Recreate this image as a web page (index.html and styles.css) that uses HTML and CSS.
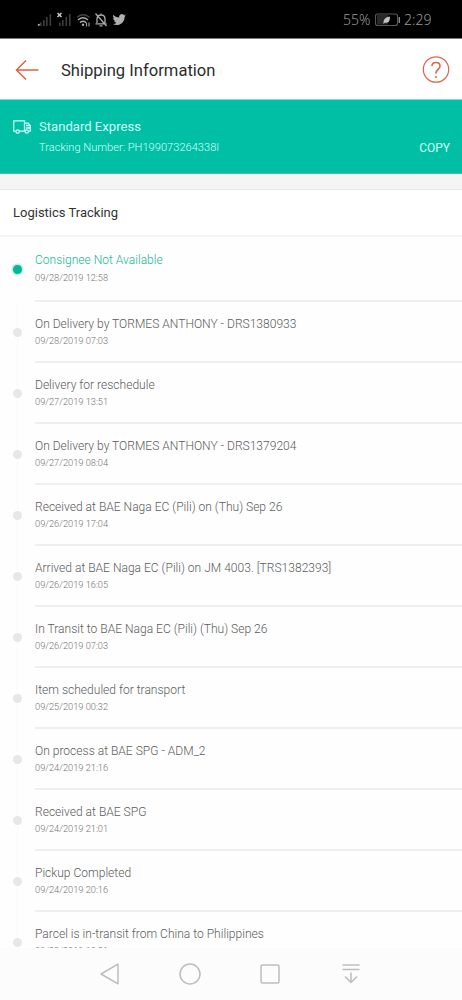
FILE: index.html
```
<!DOCTYPE html>
<html lang="en">
<head>
<meta charset="utf-8">
<title>Shipping Information</title>
<link rel="stylesheet" href="styles.css">
</head>
<body>
<div class="screen">
  <div class="status">
    <svg class="status-icons" width="92" height="16" viewBox="0 0 92 16">
      <g fill="#3d3d3d"><path d="M3 10.500h1.600V14H3zM6 8h1.600v6H6zM9 5h1.600v9H9zM12.500 2h1.600v12h-1.600z"/><path d="M22 10.500h1.600V14H22zM25 8h1.600v6H25zM28.500 5h1.600v9h-1.600zM32 2h1.600v12H32z"/></g>
      <circle cx="1.800" cy="12.800" r="1.100" fill="#aaa"/>
      <path d="M20.500 1l4 4M24.500 1l-4 4" stroke="#ccc" stroke-width="1.500"/>
      <g fill="none" stroke="#aaa" stroke-width="1.500" stroke-linecap="round"><path d="M40.500 5Q46 .5 52 5" stroke="#444"/><path d="M41.500 7.500Q46 4 50.500 7.500M43.500 10.200Q46 8.200 48.500 10.200"/></g>
      <circle cx="46" cy="12.700" r="1.200" fill="#aaa"/><path d="M49.500 10.500v4M52 10.500v4" stroke="#999" stroke-width="1.200"/>
      <path d="M60 11V7q0-4 4-4t4 4v4M58.500 11.800h11M62.500 13.800h3M58.500 1.500l11 12.500M64 1.500v1.500" fill="none" stroke="#aaa" stroke-width="1.300"/>
      <path transform="translate(75.500 .9) scale(.56)" fill="#b0b0b0" d="M23.950 4.570a10 10 0 0 1-2.820.77 4.960 4.960 0 0 0 2.160-2.720c-.95.550-2 .950-3.130 1.180a4.920 4.920 0 0 0-8.380 4.480C7.690 8.090 4.070 6.130 1.640 3.160a4.820 4.820 0 0 0-.67 2.480c0 1.710.87 3.210 2.190 4.100a4.900 4.900 0 0 1-2.230-.62v.06a4.920 4.920 0 0 0 3.950 4.830 5 5 0 0 1-2.210.080 4.940 4.940 0 0 0 4.600 3.420A9.870 9.870 0 0 1 0 19.540a14 14 0 0 0 7.550 2.210c9.050 0 14-7.500 14-13.980v-.63a9.940 9.940 0 0 0 2.400-2.570z"/>
    </svg>
    <div class="status-right">
      <span class="percent">55%</span>
      <svg width="26" height="14" viewBox="0 0 26 14"><rect x="-.5" y="1" width="22" height="11.500" rx="2" fill="#000" stroke="#585858" stroke-width="1.100"/><path d="M1 2h11v9.500H1z" fill="#292929"/><path d="M23.300 4v6" stroke="#888" stroke-width="1.500"/><path d="M7.500 11q-1-6.500 6.500-7.500 0 7.500-5 6z" fill="#c4c4c4"/></svg>
      <span class="clock">2:29</span>
    </div>
  </div>
  <header class="bar">
    <svg class="back" width="24" height="22" viewBox="0 0 24 22"><path d="M23.500 11H1.500M11 1.500L1.500 11l9.500 9.500" fill="none" stroke="#dc6242" stroke-width="1.500"/></svg>
    <h1 class="title">Shipping Information</h1>
    <svg class="help" width="28" height="28" viewBox="0 0 28 28" fill="none" stroke="#dc6650"><circle cx="14" cy="13.500" r="12.700" stroke-width="1.200"/><path d="M10 10Q10 6.500 14 6.500t4 3.500q0 2-2 3.500t-2 4" stroke-width="1.600"/><circle cx="14" cy="21" r="1.100" fill="#dc6650" stroke="none"/></svg>
  </header>
  <section class="carrier">
    <svg class="truck" width="18" height="14" viewBox="0 0 18 14" fill="none" stroke="#c9fff6" stroke-width="1.300"><path d="M2.700 11.200H.7V.8h10.800v10.400H6.700M11.500 3.200h3.800l2 2.500v5.500h-1.500M11.500 11.200h.5M13 5.500h4M13 8h4"/><circle cx="4.700" cy="11.500" r="1.700"/><circle cx="13.700" cy="11.500" r="1.700"/></svg>
    <div class="carrier-text">
      <div class="carrier-name">Standard Express</div>
      <div class="carrier-number">Tracking Number: PH199073264338I</div>
    </div>
    <span class="copy">COPY</span>
  </section>
  <div class="gap"></div>
  <h2 class="heading">Logistics Tracking</h2>
  <main class="list">
    <div class="row current"><i class="rail"><b class="dot"></b></i><div class="event"><p class="name">Consignee Not Available</p><p class="date">09/28/2019 12:58</p></div></div>
    <div class="row"><i class="rail"><b class="dot"></b></i><div class="event"><p class="name">On Delivery by TORMES ANTHONY - DRS1380933</p><p class="date">09/28/2019 07:03</p></div></div>
    <div class="row"><i class="rail"><b class="dot"></b></i><div class="event"><p class="name">Delivery for reschedule</p><p class="date">09/27/2019 13:51</p></div></div>
    <div class="row"><i class="rail"><b class="dot"></b></i><div class="event"><p class="name">On Delivery by TORMES ANTHONY - DRS1379204</p><p class="date">09/27/2019 08:04</p></div></div>
    <div class="row"><i class="rail"><b class="dot"></b></i><div class="event"><p class="name">Received at BAE Naga EC (Pili) on (Thu) Sep 26</p><p class="date">09/26/2019 17:04</p></div></div>
    <div class="row"><i class="rail"><b class="dot"></b></i><div class="event"><p class="name">Arrived at BAE Naga EC (Pili) on JM 4003. [TRS1382393]</p><p class="date">09/26/2019 16:05</p></div></div>
    <div class="row"><i class="rail"><b class="dot"></b></i><div class="event"><p class="name">In Transit to BAE Naga EC (Pili) (Thu) Sep 26</p><p class="date">09/26/2019 07:03</p></div></div>
    <div class="row"><i class="rail"><b class="dot"></b></i><div class="event"><p class="name">Item scheduled for transport</p><p class="date">09/25/2019 00:32</p></div></div>
    <div class="row"><i class="rail"><b class="dot"></b></i><div class="event"><p class="name">On process at BAE SPG - ADM_2</p><p class="date">09/24/2019 21:16</p></div></div>
    <div class="row"><i class="rail"><b class="dot"></b></i><div class="event"><p class="name">Received at BAE SPG</p><p class="date">09/24/2019 21:01</p></div></div>
    <div class="row"><i class="rail"><b class="dot"></b></i><div class="event"><p class="name">Pickup Completed</p><p class="date">09/24/2019 20:16</p></div></div>
    <div class="row"><i class="rail"><b class="dot"></b></i><div class="event"><p class="name">Parcel is in-transit from China to Philippines</p><p class="date">09/23/2019 18:51</p></div></div>
  </main>
  <nav class="nav">
    <svg width="24" height="24" viewBox="0 0 24 24"><path d="M20 2.200v19.600L3 12z"/></svg>
    <svg width="24" height="24" viewBox="0 0 24 24"><circle cx="12" cy="12" r="10"/></svg>
    <svg width="24" height="24" viewBox="0 0 24 24"><rect x="3" y="3" width="18" height="18" rx="1.500"/></svg>
    <svg width="24" height="24" viewBox="0 0 24 24"><path d="M4.500 3h17M4.500 7.500h17M13 10.500v10M7 14.500l6 6 6-6"/></svg>
  </nav>
</div>
</body>
</html>
```
FILE: styles.css
```
* { box-sizing: border-box; margin: 0; padding: 0; }
body { font-family: Roboto, "Liberation Sans", sans-serif; background: #fff; }
.screen { width: 462px; height: 1000px; display: flex; flex-direction: column; overflow: hidden; background: #fefefe; }
.screen > * { flex-shrink: 0; }
svg { display: block; flex-shrink: 0; overflow: visible; }

.status { height: 39px; background: #000; border-bottom: 1px solid #777; display: flex; align-items: center; justify-content: space-between; padding: 1px 30px 0 37px; }
.status-right { display: flex; align-items: center; font-family: "Noto Sans", sans-serif; font-size: 14px; font-weight: 300; color: #999; }
.percent { width: 33px; }
.clock { width: 28px; margin-left: 2px; }

.bar { height: 60px; background: #fff; display: flex; align-items: center; padding: 1px 12px 0 15px; }
.title { margin-left: 22px; padding-top: 1px; font-size: 16.600px; font-weight: 400; color: #2c2c2c; flex: 1; white-space: nowrap; }

.carrier { height: 75px; background: #01bfa5; border-top: 1px solid #7cdccd; border-bottom: 1px solid #5ab9aa; display: flex; padding-left: 13px; color: #cffff7; }
.truck { margin-top: 20px; }
.carrier-text { margin-left: 8px; flex: 1; padding-top: 17px; }
.carrier-name { font-size: 13.100px; line-height: 20px; font-weight: 400; }
.carrier-number { font-size: 11.100px; line-height: 20px; margin-top: 1px; font-weight: 300; }
.copy { font-size: 12px; line-height: 20px; margin: 38px 12px 0 0; }

.gap { height: 16px; background: #f5f5f5; border-bottom: 1px solid #e9e9e9; }
.heading { height: 47px; background: #fff; border-bottom: 2px solid #f3f3f3; padding: 0 13px; font-size: 13px; line-height: 45px; font-weight: 400; color: #333; }

.list { height: 711px; overflow: hidden; background: #fefefe; }
.row { height: 61px; display: flex; }
.rail { width: 35px; flex-shrink: 0; display: flex; padding: 25.500px 0 0 13px; background: linear-gradient(#fafafa, #fafafa) 17px 0 / 1px 100% no-repeat; }
.dot { width: 9px; height: 9px; border-radius: 50%; background: #e7e7e7; }
.event { flex: 1; border-bottom: 2px solid #efefef; padding-top: 13px; white-space: nowrap; }
.name { font-size: 12.050px; line-height: 19px; font-weight: 300; color: #5c5c5c; }
.date { font-size: 9.250px; line-height: 14px; font-weight: 300; color: #747474; }
.current { height: 65px; }
.current .event { padding-top: 14px; }
.current .name { color: #17b995; }
.current .date { margin-top: 1px; }
.current .rail { background: none; padding-top: 27.500px; }
.current .dot { background: #08b598; box-shadow: 0 0 0 1.500px #b5f2e5; }

.nav { flex: 1; background: #fcfcfc; display: grid; grid-template-columns: repeat(4, 24px); column-gap: 56.300px; align-items: center; padding-left: 97.500px; }
.nav svg { fill: none; stroke: #bdbdbd; stroke-width: 1.500; stroke-linejoin: round; }
```
